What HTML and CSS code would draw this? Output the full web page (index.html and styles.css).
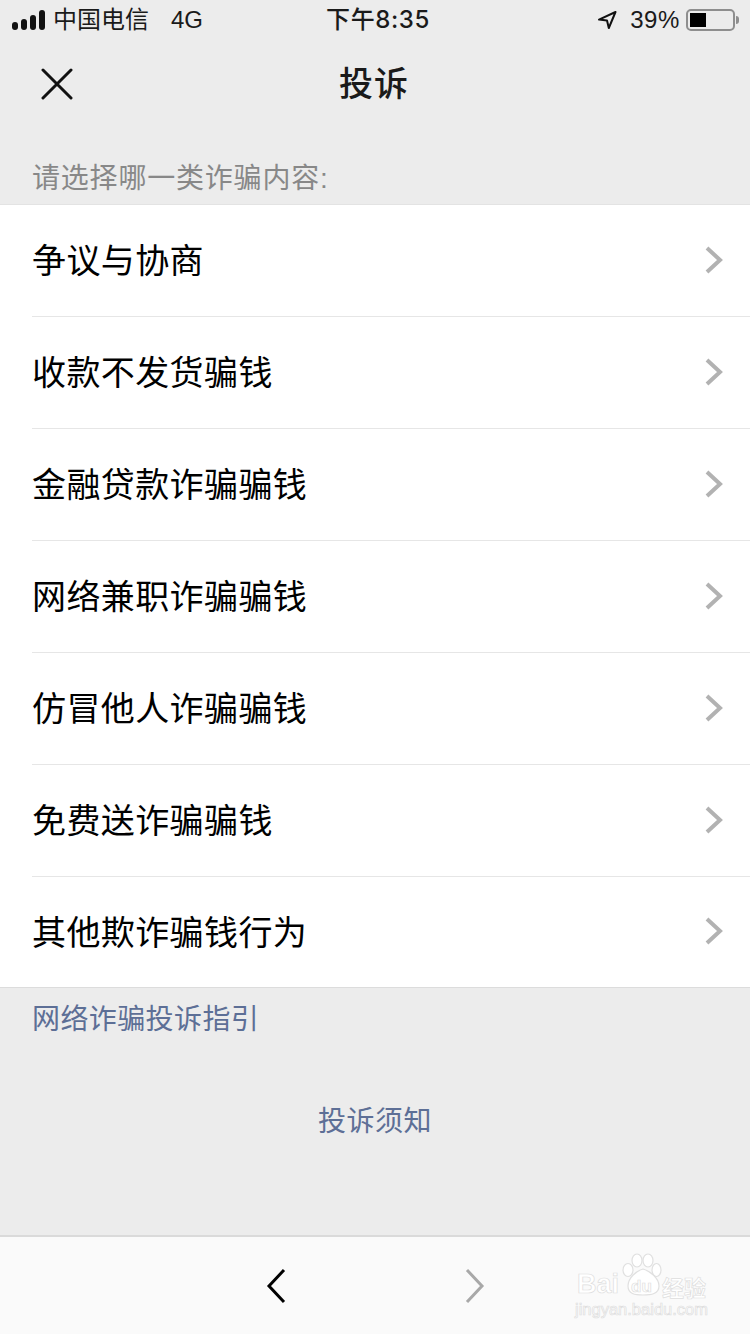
FILE: index.html
```html
<!DOCTYPE html>
<html lang="zh-CN">
<head>
  <meta charset="UTF-8" />
  <meta name="viewport" content="width=device-width, initial-scale=1" />
  <title>投诉</title>
  <link rel="stylesheet" href="styles.css">
</head>
<body>

  <div class="statusbar">
    <div class="status-left">
      <div class="signal"><i></i><i></i><i></i><i></i></div>
      <span class="carrier">中国电信</span>
      <span class="network">4G</span>
    </div>
    <div class="status-time">下午8:35</div>
    <div class="status-right">
      <svg class="location" width="20" height="20" viewBox="0 0 20 20">
        <path d="M18.5 2 L2 9.6 L10 10.6 L11.8 18 Z" fill="none" stroke="#111" stroke-width="2" stroke-linejoin="round"/>
      </svg>
      <span class="percent">39%</span>
      <div class="battery"><div class="battery-level"></div></div>
      <div class="battery-tip"></div>
    </div>
  </div>

  <div class="navbar">
    <svg class="close" width="32" height="32" viewBox="0 0 32 32">
      <path d="M2 2 L30 30 M30 2 L2 30" stroke="#111" stroke-width="3" stroke-linecap="round"/>
    </svg>
    <h1>投诉</h1>
  </div>

  <p class="hint">请选择哪一类诈骗内容:</p>

  <div class="list">
    <div class="row"><div class="row-inner"><span>争议与协商</span><svg class="arrow" width="20" height="30" viewBox="0 0 20 30"><path d="M3 3 L16 15 L3 27" fill="none" stroke="#b2b2b2" stroke-width="4"/></svg></div></div>
    <div class="row"><div class="row-inner"><span>收款不发货骗钱</span><svg class="arrow" width="20" height="30" viewBox="0 0 20 30"><path d="M3 3 L16 15 L3 27" fill="none" stroke="#b2b2b2" stroke-width="4"/></svg></div></div>
    <div class="row"><div class="row-inner"><span>金融贷款诈骗骗钱</span><svg class="arrow" width="20" height="30" viewBox="0 0 20 30"><path d="M3 3 L16 15 L3 27" fill="none" stroke="#b2b2b2" stroke-width="4"/></svg></div></div>
    <div class="row"><div class="row-inner"><span>网络兼职诈骗骗钱</span><svg class="arrow" width="20" height="30" viewBox="0 0 20 30"><path d="M3 3 L16 15 L3 27" fill="none" stroke="#b2b2b2" stroke-width="4"/></svg></div></div>
    <div class="row"><div class="row-inner"><span>仿冒他人诈骗骗钱</span><svg class="arrow" width="20" height="30" viewBox="0 0 20 30"><path d="M3 3 L16 15 L3 27" fill="none" stroke="#b2b2b2" stroke-width="4"/></svg></div></div>
    <div class="row"><div class="row-inner"><span>免费送诈骗骗钱</span><svg class="arrow" width="20" height="30" viewBox="0 0 20 30"><path d="M3 3 L16 15 L3 27" fill="none" stroke="#b2b2b2" stroke-width="4"/></svg></div></div>
    <div class="row"><div class="row-inner"><span>其他欺诈骗钱行为</span><svg class="arrow" width="20" height="30" viewBox="0 0 20 30"><path d="M3 3 L16 15 L3 27" fill="none" stroke="#b2b2b2" stroke-width="4"/></svg></div></div>
  </div>

  <a class="guide">网络诈骗投诉指引</a>
  <a class="notice">投诉须知</a>

  <div class="toolbar">
    <svg class="tool-back" width="22" height="36" viewBox="0 0 22 36">
      <path d="M18 2 L3 18 L18 34" fill="none" stroke="#000" stroke-width="3"/>
    </svg>
    <svg class="tool-forward" width="22" height="36" viewBox="0 0 22 36">
      <path d="M4 2 L19 18 L4 34" fill="none" stroke="#a8a8a8" stroke-width="3"/>
    </svg>
    <div class="watermark">
      <div class="wm-top">
        <span class="wm-bai">Bai</span>
        <svg class="wm-paw" width="40" height="44" viewBox="0 0 40 44">
          <g fill="#fff" stroke="#e0e0e0" stroke-width="1.2">
            <ellipse cx="6" cy="17" rx="5" ry="6.5"/>
            <ellipse cx="15" cy="7.5" rx="5" ry="6.5"/>
            <ellipse cx="26" cy="7.5" rx="5" ry="6.5"/>
            <ellipse cx="34.5" cy="17" rx="4.5" ry="6.5"/>
            <path d="M21 16 C14 18 6 25 6 33 C6 41 13 42 21 42 C29 42 37 41 37 33 C37 25 28 18 21 16 Z"/>
          </g>
        </svg>
        <span class="wm-du">du</span>
        <span class="wm-jy">经验</span>
      </div>
      <div class="wm-url">jingyan.baidu.com</div>
    </div>
  </div>

</body>
</html>
```

FILE: styles.css
```css
* {
  box-sizing: border-box;
}
html, body {
  height: 100%;
}
body {
  margin: 0;
  position: relative;
  height: 1334px;
  overflow: hidden;
  background-color: #ececec;
  color: #000;
  font-family: "Liberation Sans", "Noto Sans CJK SC", sans-serif;
}

.statusbar {
  height: 40px;
  padding: 0 11px 0 12px;
  display: flex;
  align-items: center;
  justify-content: space-between;
  font-size: 24px;
  line-height: 40px;
  color: #1a1a1a;
}
.status-left {
  display: flex;
  align-items: center;
  width: 270px;
}
.signal {
  display: flex;
  align-items: flex-end;
  gap: 3px;
  margin-right: 8px;
}
.signal i {
  display: block;
  width: 6px;
  border-radius: 3px;
  background-color: #111;
}
.signal i:nth-child(1) { height: 8px; }
.signal i:nth-child(2) { height: 11px; }
.signal i:nth-child(3) { height: 15px; }
.signal i:nth-child(4) { height: 20px; }
.network {
  margin-left: 22px;
}
.status-time {
  font-family: Inter, "Noto Sans CJK SC", sans-serif;
  font-weight: 500;
  margin-left: 5px;
  letter-spacing: 0.6px;
}
.status-right {
  display: flex;
  align-items: center;
  justify-content: flex-end;
  width: 270px;
}
.location {
  margin-right: 13px;
}
.percent {
  margin-right: 6px;
  letter-spacing: 0.6px;
}
.battery {
  width: 49px;
  height: 22px;
  border: 2px solid #8e8e8e;
  border-radius: 5px;
  padding: 2px;
}
.battery-level {
  width: 16px;
  height: 100%;
  background-color: #000;
}
.battery-tip {
  width: 3px;
  height: 8px;
  margin-left: 1px;
  border-radius: 0 3px 3px 0;
  background-color: #8e8e8e;
}

.navbar {
  position: relative;
  height: 88px;
  padding: 0 2px 6px 0;
  display: flex;
  align-items: center;
  justify-content: center;
}
.navbar h1 {
  margin: 0;
  font-size: 34px;
  font-weight: 500;
  letter-spacing: 1px;
  color: #1a1a1a;
}
.close {
  position: absolute;
  left: 41px;
  top: 28px;
}

.hint {
  margin: 0;
  height: 76px;
  padding: 31px 0 0 32px;
  font-size: 28px;
  line-height: 40px;
  letter-spacing: 0.8px;
  color: #888;
}

.list {
  background-color: #fff;
  border-top: 1px solid #e3e3e3;
  border-bottom: 1px solid #dcdcdc;
}
.row {
  height: 112px;
  padding-left: 32px;
}
.row:last-child {
  height: 110px;
}
.row-inner {
  height: 100%;
  padding: 0 26px 2px 0;
  display: flex;
  align-items: center;
  justify-content: space-between;
  border-bottom: 1px solid #e6e6e6;
  font-size: 34px;
}
.row-inner span {
  margin-bottom: 2px;
  letter-spacing: 0.4px;
}
.row:last-child .row-inner {
  border-bottom: none;
}

.guide {
  display: block;
  padding: 2px 0 0 32px;
  font-size: 28px;
  line-height: 60px;
  letter-spacing: 0.4px;
  color: #5d6f96;
}
.notice {
  display: block;
  margin-top: 52px;
  text-align: center;
  font-size: 28px;
  line-height: 40px;
  letter-spacing: 0.5px;
  color: #5d6f96;
}

.toolbar {
  position: absolute;
  left: 0;
  right: 0;
  bottom: 0;
  height: 99px;
  display: flex;
  align-items: center;
  padding-left: 266px;
  gap: 175px;
  background-color: #fafafa;
  border-top: 2px solid #dadada;
}

.watermark {
  position: absolute;
  left: 575px;
  top: 16px;
  width: 140px;
  color: #fff;
  -webkit-text-stroke: 0.7px #dedede;
}
.wm-top {
  position: relative;
  height: 46px;
}
.wm-bai, .wm-du, .wm-jy {
  position: absolute;
  font-weight: 700;
}
.wm-bai {
  left: 2px;
  top: 16px;
  font-size: 27px;
}
.wm-paw {
  position: absolute;
  left: 47px;
  top: 0;
}
.wm-du {
  left: 56px;
  top: 24px;
  font-size: 17px;
}
.wm-jy {
  left: 87px;
  top: 17px;
  font-size: 22px;
  white-space: nowrap;
}
.wm-url {
  font-size: 16.5px;
  line-height: 20px;
  white-space: nowrap;
}
```
